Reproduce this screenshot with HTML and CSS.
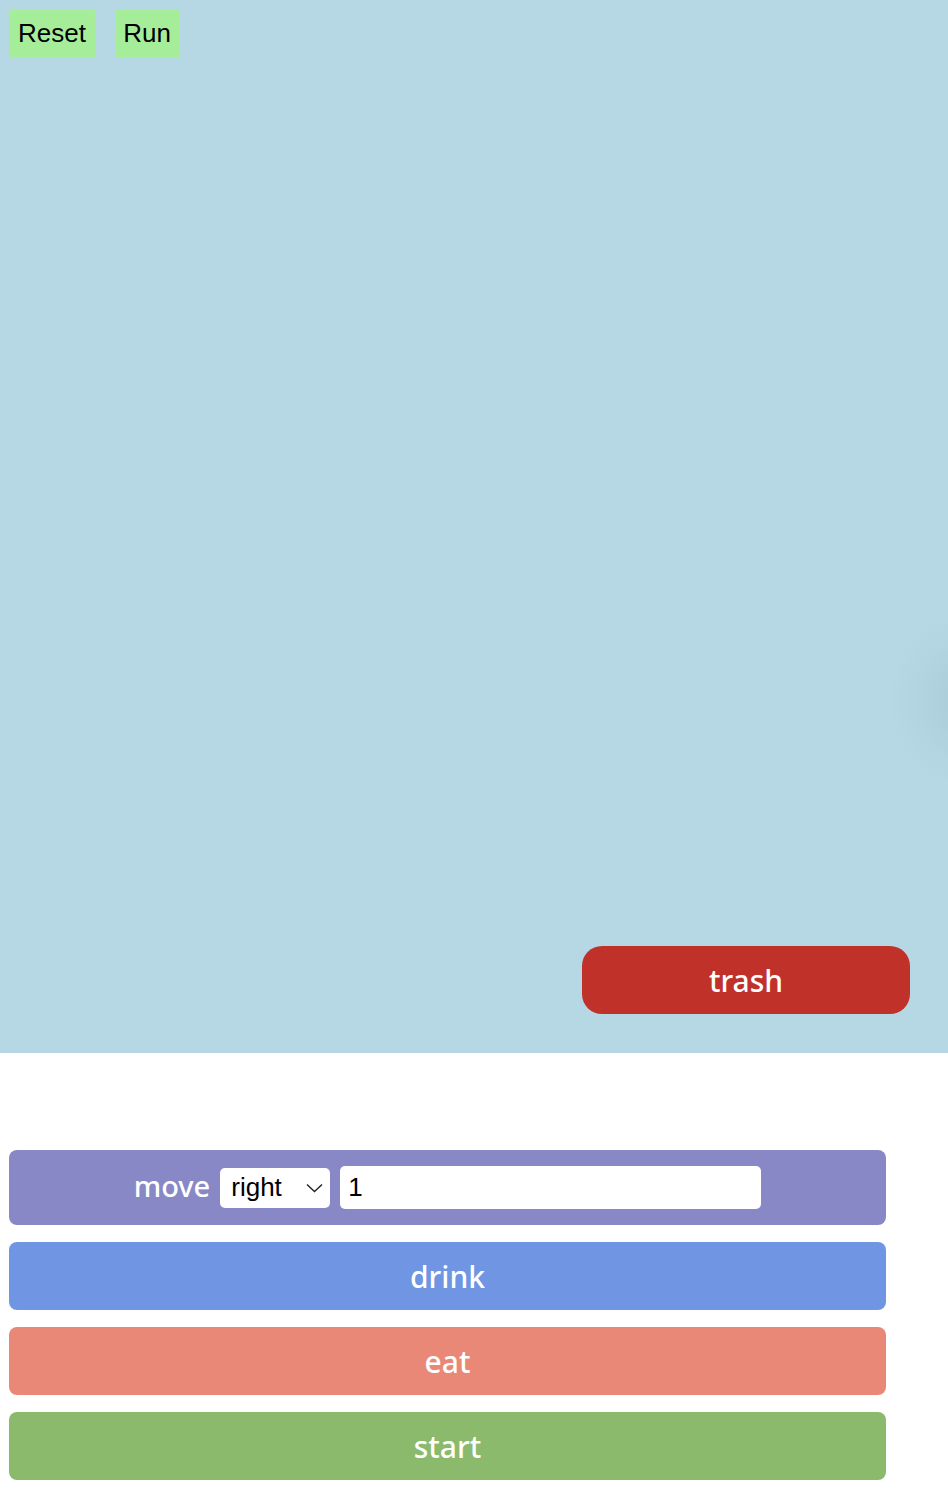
FILE: index.html
```html
<!DOCTYPE html>
<html>
<head>
<meta charset="utf-8">
<link rel="stylesheet" href="styles.css">
</head>
<body>
<div class="stage">
  <div class="toolbar">
    <button class="tool-btn btn-reset">Reset</button>
    <button class="tool-btn btn-run">Run</button>
  </div>
  <div class="shade"></div>
  <div class="trash-row">
    <div class="trash">trash</div>
  </div>
</div>
<div class="palette">
  <div class="block block-move">
    <span class="label">move</span>
    <div class="select">
      <span>right</span>
      <svg class="chev" width="17" height="10" viewBox="0 0 17 10"><path d="M1 1.5 L8.5 8.5 L16 1.5" fill="none" stroke="#222" stroke-width="1.4"/></svg>
    </div>
    <div class="input">1</div>
  </div>
  <div class="block block-drink">drink</div>
  <div class="block block-eat">eat</div>
  <div class="block block-start">start</div>
</div>
</body>
</html>
```
FILE: styles.css
```css
html, body { margin: 0; padding: 0; background: #fff; }
body { width: 948px; overflow: hidden; }
.stage {
  position: relative;
  height: 1053px;
  background: #b6d8e4;
  display: flex;
  flex-direction: column;
  overflow: hidden;
}
.toolbar {
  display: flex;
  gap: 20px;
  padding: 10px 0 0 9px;
}
.tool-btn {
  font-family: "Liberation Sans", Arial, sans-serif;
  font-size: 26px;
  color: #000;
  background: #a6ed9a;
  border: none;
  height: 47px;
  padding: 0;
  margin: 0;
  text-align: center;
}
.btn-reset { width: 86px; }
.btn-run { width: 64px; }
.shade {
  position: absolute;
  right: -110px;
  top: 610px;
  width: 170px;
  height: 180px;
  border-radius: 50%;
  background: radial-gradient(closest-side, rgba(150,185,200,0.45), rgba(165,200,212,0.2) 70%, rgba(182,216,228,0) 100%);
}
.trash-row {
  margin-top: auto;
  display: flex;
  justify-content: flex-end;
  padding: 0 38px 39px 0;
}
.trash {
  width: 328px;
  height: 68px;
  border-radius: 20px;
  background: #c0312a;
  color: #fff;
  font-family: "Noto Sans", "DejaVu Sans", sans-serif;
  font-weight: 500;
  font-size: 30px;
  display: flex;
  align-items: center;
  justify-content: center;
}
.palette {
  padding: 97px 0 0 9px;
  display: flex;
  flex-direction: column;
  gap: 17px;
  width: 877px;
}
.block {
  height: 68px;
  border-radius: 8px;
  color: #fff;
  font-family: "Noto Sans", "DejaVu Sans", sans-serif;
  font-weight: 500;
  font-size: 30px;
  display: flex;
  align-items: center;
  justify-content: center;
}
.block-move {
  height: 75px;
  background: #8988c6;
  gap: 10px;
}
.block-move .label { padding-bottom: 4px; font-size: 29px; }
.select {
  width: 110px;
  height: 40px;
  box-sizing: border-box;
  background: #fff;
  border-radius: 5px;
  display: flex;
  align-items: center;
  justify-content: space-between;
  padding: 0 7px 0 11px;
  color: #000;
  font-family: "Liberation Sans", Arial, sans-serif;
  font-weight: 400;
  font-size: 26px;
}
.input {
  width: 421px;
  height: 43px;
  box-sizing: border-box;
  background: #fff;
  border-radius: 5px;
  display: flex;
  align-items: center;
  padding-left: 8px;
  color: #000;
  font-family: "Liberation Sans", Arial, sans-serif;
  font-weight: 400;
  font-size: 26px;
}
.block-drink { background: #6f95e3; }
.block-eat { background: #ea8878; }
.block-start { background: #8bba6c; }
```
